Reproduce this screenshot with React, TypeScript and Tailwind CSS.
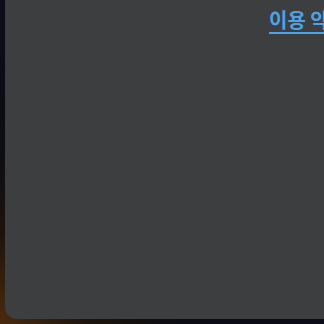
export default function App() {
  return (
    <div className="w-[324px] h-[324px] overflow-hidden bg-[radial-gradient(circle_at_0%_100%,#4a2a0e_0%,#1c130c_20%,#0b0c14_40%,#0a0c1a_100%)] pl-[5px] pb-[5px]">
      <div className="w-[420px] h-full bg-[#3d3e40] rounded-bl-[12px] pt-[5px] pl-[264px]">
        <a
          href="#"
          className="whitespace-nowrap text-[20px] font-bold text-[#4da3e6] underline underline-offset-[4px] decoration-[1.5px]"
          style={{ fontFamily: '"Noto Sans CJK KR", "Noto Sans", sans-serif' }}
        >
          이용 약관
        </a>
      </div>
    </div>
  )
}
